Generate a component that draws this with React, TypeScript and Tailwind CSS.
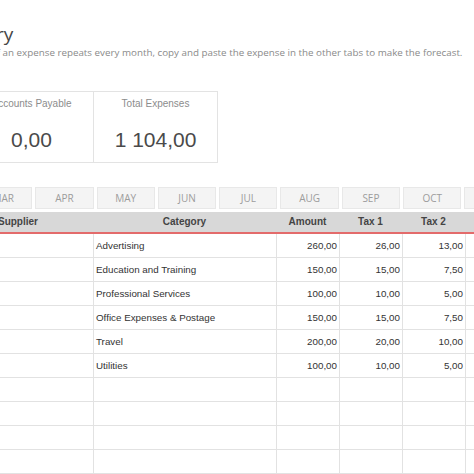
const months = ["MAR", "APR", "MAY", "JUN", "JUL", "AUG", "SEP", "OCT", "NOV"]

const rows = [
  { category: "Advertising", amount: "260,00", tax1: "26,00", tax2: "13,00" },
  { category: "Education and Training", amount: "150,00", tax1: "15,00", tax2: "7,50" },
  { category: "Professional Services", amount: "100,00", tax1: "10,00", tax2: "5,00" },
  { category: "Office Expenses & Postage", amount: "150,00", tax1: "15,00", tax2: "7,50" },
  { category: "Travel", amount: "200,00", tax1: "20,00", tax2: "10,00" },
  { category: "Utilities", amount: "100,00", tax1: "10,00", tax2: "5,00" },
  { category: "", amount: "", tax1: "", tax2: "" },
  { category: "", amount: "", tax1: "", tax2: "" },
  { category: "", amount: "", tax1: "", tax2: "" },
  { category: "", amount: "", tax1: "", tax2: "" },
]

export default function App() {
  return (
    <div className="w-[474px] h-[474px] overflow-hidden bg-white font-['Liberation_Sans',Arial,sans-serif]">
      {/* heading */}
      <div className="pt-[23px] -ml-[112px] whitespace-nowrap font-['Open_Sans',sans-serif] text-[19px] leading-[22px] text-[#454545]">
        Expense Entry
      </div>
      <div className="mt-[2px] -ml-[6px] whitespace-nowrap font-['Open_Sans',sans-serif] text-[9.8px] leading-[12px] text-[#8a8a8a]">
        If an expense repeats every month, copy and paste the expense in the other tabs to make the forecast.
      </div>

      {/* summary cards */}
      <div className="mt-[32px] -ml-[31px] flex">
        <div className="w-[125px] h-[72px] border border-[#e3e3e3] flex flex-col items-center">
          <div className="mt-[6px] text-[10px] leading-[12px] text-[#8c8c8c] whitespace-nowrap">Accounts Payable</div>
          <div className="mt-[18px] text-[21px] leading-[24px] text-[#4a4a4a]">0,00</div>
        </div>
        <div className="w-[125px] h-[72px] -ml-px border border-[#e3e3e3] flex flex-col items-center">
          <div className="mt-[6px] text-[10px] leading-[12px] text-[#8c8c8c] whitespace-nowrap">Total Expenses</div>
          <div className="mt-[18px] text-[21px] leading-[24px] text-[#4a4a4a]">1 104,00</div>
        </div>
      </div>

      {/* month tabs */}
      <div className="mt-[24px] -ml-[26px] flex gap-[3px]">
        {months.map((m) => (
          <div
            key={m}
            className="w-[58.3px] h-[22px] shrink-0 flex items-center justify-center bg-[#f4f4f4] border border-[#e8e8e8] font-['Open_Sans',sans-serif] text-[10px] text-[#9c9c9c]"
          >
            {m}
          </div>
        ))}
      </div>

      {/* table */}
      <div className="mt-[3px] -ml-[57px] w-[600px]">
        <div className="flex h-[20px] bg-[#d8d8d8] border-b-2 border-[#e36b6b] text-[10px] font-bold text-[#444] leading-[20px] box-content">
          <div className="w-[150px] text-center">Supplier</div>
          <div className="w-[183px] text-center">Category</div>
          <div className="w-[63px] text-center">Amount</div>
          <div className="w-[63px] text-center">Tax 1</div>
          <div className="w-[63px] text-center">Tax 2</div>
          <div className="w-[63px] text-center">Total</div>
        </div>
        {rows.map((r, i) => (
          <div key={i} className="flex h-[24px] border-b border-[#e2e2e2] text-[9.8px] text-[#333] leading-[23px]">
            <div className="w-[151px] border-r border-[#e2e2e2]" />
            <div className="w-[183px] border-r border-[#e2e2e2] pl-[2px] whitespace-nowrap">{r.category}</div>
            <div className="w-[63px] border-r border-[#e2e2e2] pr-[2px] text-right">{r.amount}</div>
            <div className="w-[63px] border-r border-[#e2e2e2] pr-[2px] text-right">{r.tax1}</div>
            <div className="w-[63px] border-r border-[#e2e2e2] pr-[2px] text-right">{r.tax2}</div>
            <div className="w-[63px] border-r border-[#e2e2e2]" />
          </div>
        ))}
        <div className="h-[20px] bg-[#f0f0f0]" />
      </div>
    </div>
  )
}
